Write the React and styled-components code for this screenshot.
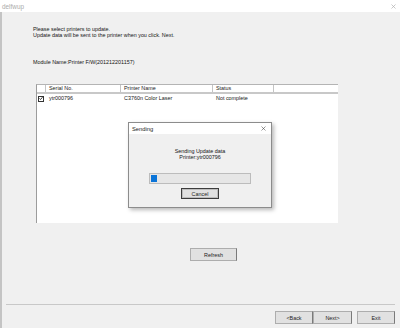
import React from "react";
import styled, { createGlobalStyle } from "styled-components";

const Global = createGlobalStyle`
  html, body { margin: 0; padding: 0; background: #f0f0f0; }
  body { font-family: "Liberation Sans", Arial, sans-serif; }
  * { box-sizing: border-box; }
`;

const Window = styled.div`
  position: relative;
  width: 400px;
  height: 328px;
  display: flex;
  flex-direction: column;
  background: #f0f0f0;
  font-size: 5.4px;
  color: #151515;
  overflow: hidden;
`;

const TitleBar = styled.div`
  height: 12px;
  flex: none;
  background: #ffffff;
  display: flex;
  align-items: center;
  justify-content: space-between;
  padding: 0 4px 0 2px;
  color: #ababab;
  font-size: 6.4px;
`;

const CloseGlyph = styled.svg`
  width: ${(p) => p.$size}px;
  height: ${(p) => p.$size}px;
  display: block;
`;

const Body = styled.div`
  flex: 1;
  display: flex;
  flex-direction: column;
  padding: 14px 0 0 0;
  border-left: 2px solid #c4c4c4;
`;

const Instructions = styled.div`
  padding-left: 31px;
  line-height: 6px;
`;

const ModuleName = styled.div`
  padding-left: 31px;
  line-height: 6px;
  margin-top: 21px;
`;

const ListBox = styled.div`
  margin: 19px 0 0 34px;
  width: 302px;
  height: 139px;
  background: #ffffff;
  border-left: 1px solid #9c9c9c;
  border-top: 1px solid #b4b4b4;
  display: flex;
  flex-direction: column;
`;

const HeaderRow = styled.div`
  display: grid;
  grid-template-columns: 9px 75px 92px 61px 1fr;
  height: 9px;
  border-bottom: 2px solid #c8c8c8;
`;

const HeaderCell = styled.div`
  border-right: ${(p) => (p.$last ? "none" : "1px solid #c4c4c4")};
  padding-left: 3px;
  line-height: 7px;
  color: #222;
`;

const DataRow = styled.div`
  display: grid;
  grid-template-columns: 9px 75px 92px 61px 1fr;
  height: 9px;
  align-items: center;
`;

const Cell = styled.div`
  padding-left: ${(p) => p.$pad ?? 3}px;
  line-height: 7px;
  white-space: nowrap;
`;

const Check = styled.div`
  width: 6px;
  height: 6px;
  border: 1px solid #333;
  background: #fff;
  margin-left: 1px;
  display: flex;
  align-items: center;
  justify-content: center;
`;

const Button = styled.div`
  width: ${(p) => p.$w}px;
  height: ${(p) => p.$h || 13}px;
  background: #e1e1e1;
  border: 1px solid #adadad;
  border-right-color: #7a7a7a;
  display: flex;
  align-items: center;
  justify-content: center;
  color: #222;
`;

const RefreshRow = styled.div`
  margin: 25px 0 0 188px;
`;

const Separator = styled.div`
  margin: 43px 5px 0 4px;
  height: 1px;
  background: #c8c8c8;
`;

const ButtonBar = styled.div`
  display: flex;
  justify-content: flex-end;
  padding: 6px 5px 0 0;
`;

const NavGroup = styled.div`
  display: flex;
  margin-right: 5px;
`;

const Dialog = styled.div`
  position: absolute;
  left: 128px;
  top: 122px;
  width: 144px;
  height: 86px;
  background: #f0f0f0;
  border: 1px solid #8c8c8c;
  box-shadow: 2px 2px 4px rgba(0, 0, 0, 0.28);
  display: flex;
  flex-direction: column;
`;

const DialogTitle = styled.div`
  height: 11px;
  background: #ffffff;
  display: flex;
  align-items: center;
  justify-content: space-between;
  padding: 0 5px 0 3px;
  color: #1a1a1a;
  font-size: 5.8px;
`;

const DialogBody = styled.div`
  display: flex;
  flex-direction: column;
  align-items: center;
  padding-top: 14px;
`;

const DialogText = styled.div`
  text-align: center;
  line-height: 6px;
`;

const Progress = styled.div`
  margin-top: 13px;
  width: 102px;
  height: 11px;
  background: #e6e6e6;
  border: 1px solid #bcbcbc;
  padding: 1px;
`;

const ProgressFill = styled.div`
  height: 100%;
  background: #0a74d8;
`;

const DefaultButton = styled.div`
  margin-top: 4px;
  width: 38px;
  height: 11px;
  border: 1px solid #3c3c3c;
  background: #e1e1e1;
  box-shadow: inset 0 0 0 1px #bdbdbd;
  display: flex;
  align-items: center;
  justify-content: center;
  color: #222;
`;

function XIcon({ size, color, width }) {
  return (
    <CloseGlyph $size={size} viewBox="0 0 10 10">
      <path d="M1 1 L9 9 M9 1 L1 9" stroke={color} strokeWidth={width} fill="none" />
    </CloseGlyph>
  );
}

export default function App() {
  return (
    <>
      <Global />
      <Window>
        <TitleBar>
          <span>delfwup</span>
          <XIcon size={5} color="#b0b0b0" width={1.4} />
        </TitleBar>
        <Body>
          <Instructions>
            <div>Please select printers to update.</div>
            <div>Update data will be sent to the printer when you click. Next.</div>
          </Instructions>
          <ModuleName>Module Name:Printer F/W(201212201157)</ModuleName>
          <ListBox>
            <HeaderRow>
              <HeaderCell />
              <HeaderCell>Serial No.</HeaderCell>
              <HeaderCell>Printer Name</HeaderCell>
              <HeaderCell>Status</HeaderCell>
              <HeaderCell $last />
            </HeaderRow>
            <DataRow>
              <Cell $pad={0}>
                <Check>
                  <svg width="5" height="5" viewBox="0 0 5 5">
                    <path d="M0.6 2.4 L1.9 3.8 L4.4 0.8" stroke="#111" strokeWidth="1" fill="none" />
                  </svg>
                </Check>
              </Cell>
              <Cell>ytr000796</Cell>
              <Cell>C3760n Color Laser</Cell>
              <Cell>Not complete</Cell>
              <Cell />
            </DataRow>
          </ListBox>
          <RefreshRow>
            <Button $w={47}>Refresh</Button>
          </RefreshRow>
          <Separator />
          <ButtonBar>
            <NavGroup>
              <Button $w={38}>&lt;Back</Button>
              <Button $w={39}>Next&gt;</Button>
            </NavGroup>
            <Button $w={38}>Exit</Button>
          </ButtonBar>
        </Body>
        <Dialog>
          <DialogTitle>
            <span>Sending</span>
            <XIcon size={5} color="#333" width={1} />
          </DialogTitle>
          <DialogBody>
            <DialogText>
              <div>Sending Update data</div>
              <div>Printer:ytr000796</div>
            </DialogText>
            <Progress>
              <ProgressFill style={{ width: "6%" }} />
            </Progress>
            <DefaultButton>Cancel</DefaultButton>
          </DialogBody>
        </Dialog>
      </Window>
    </>
  );
}
